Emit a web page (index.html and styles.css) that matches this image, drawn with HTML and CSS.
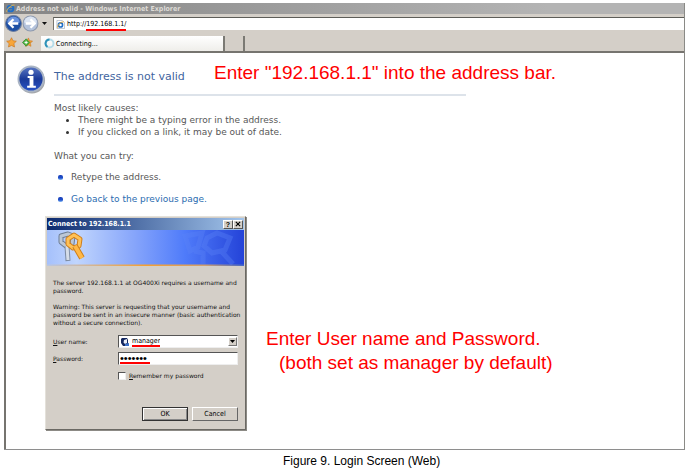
FILE: index.html
```
<!DOCTYPE html>
<html lang="en">
	<head>
		<meta charset="utf-8">
		<title>Figure 9. Login Screen (Web)</title>
		<meta name="viewport" content="width=device-width, initial-scale=1.0">
		<link rel="stylesheet" href="styles.css">
	</head>
	<body>
		<figure class="figure">
			<div class="browser">
				<header class="titlebar">
					<svg class="logo" viewBox="0 0 10 10">
						<circle cx="5" cy="5" r="3.3" fill="none" stroke="#1f6fc9" stroke-width="2"/>
						<path d="M3 5.2h5" stroke="#1f6fc9" stroke-width="1.4"/>
						<path d="M.8 8.6C1 5 6 .8 9.4 1.2" fill="none" stroke="#f0bd4a"/>
					</svg>
					<span>Address not valid - Windows Internet Explorer</span>
				</header>

				<div class="nav">
					<button class="round" type="button" aria-label="Back">
						<svg viewBox="0 0 16 16">
							<circle cx="8" cy="8" r="7.5" fill="#1d4fa4" stroke="#6f7f9e"/>
							<path d="M2 7a6 5.5 0 0 1 12 0q-6 2-12 0z" fill="#6c94dd"/>
							<path d="M12.5 8H5M8 4L4 8l4 4" fill="none" stroke="#fff" stroke-width="2.2"/>
						</svg>
					</button>
					<button class="round" type="button" aria-label="Forward">
						<svg viewBox="0 0 16 16">
							<circle cx="8" cy="8" r="7" fill="#b4c3dc" stroke="#8d99ae"/>
							<path d="M2 7a6 5.5 0 0 1 12 0q-6 2-12 0z" fill="#dbe4f2"/>
							<path d="M3.5 8H11M8 4l4 4-4 4" fill="none" stroke="#fff" stroke-width="2.2"/>
						</svg>
					</button>
					<svg class="caret" viewBox="0 0 5 3"><path d="M0 0h5L2.5 3z" fill="#111"/></svg>
					<div class="address">
						<svg class="logo" viewBox="0 0 10 10">
							<path d="M1 .5h6L9.5 3v6.5H1z" fill="#fff" stroke="#9aa5b5" stroke-width=".7"/>
							<circle cx="5" cy="5.5" r="2.3" fill="none" stroke="#1f6fc9" stroke-width="1.8"/>
							<path d="M1.5 8.5C2 5 5 2 8.5 2" fill="none" stroke="#e8a62f"/>
						</svg>
						<span>http://<mark>192.168.1.1/</mark></span>
					</div>
				</div>

				<div class="tabs">
					<svg class="star" viewBox="0 0 12 12">
						<path d="M6 .8l1.6 3.3 3.7.5-2.7 2.6.7 3.7L6 9.2l-3.3 1.7.7-3.7L.7 4.6l3.7-.5z" fill="#f8a63a" stroke="#c9741c" stroke-width=".7"/>
					</svg>
					<svg class="star" viewBox="0 0 12 12">
						<path d="M7 1l1.3 3 3.2.4-2.3 2.3.6 3.5-2.8-1.5-3 1.5.5-3.5L2 4.4 5.5 4z" fill="#f5a43b" stroke="#c9741c" stroke-width=".6"/>
						<path d="M4.5 2L8.5 6l-4 4L.5 6z" fill="#53b848" stroke="#267c24" stroke-width=".7"/>
						<path d="M4.5 4.3v3.4M2.8 6h3.4" stroke="#fff"/>
					</svg>
					<div class="tab">
						<svg class="spinner" viewBox="0 0 11 11">
							<circle cx="5.5" cy="5.5" r="4" fill="none" stroke="#b5dcea" stroke-width="2"/>
							<path d="M5.5 1.5a4 4 0 0 0-2 7.4" fill="none" stroke="#2f92b8" stroke-width="2"/>
						</svg>
						<span>Connecting...</span>
					</div>
					<div class="newtab"></div>
				</div>

				<main class="page">
					<svg class="info" viewBox="0 0 30 30">
						<defs>
							<linearGradient id="blue" x2="0" y2="1">
								<stop offset="0" stop-color="#5b78c4"/>
								<stop offset=".5" stop-color="#1b3a99"/>
								<stop offset="1" stop-color="#2a55c8"/>
							</linearGradient>
						</defs>
						<circle cx="15.5" cy="16" r="13.5" fill="#a5a7a9"/>
						<circle cx="14.5" cy="14.5" r="13" fill="url(#blue)" stroke="#a9b4c4" stroke-width="2"/>
						<circle cx="14.5" cy="7.5" r="2.7" fill="#fff"/>
						<path d="M11 11.5h6v10h2.5v2h-9v-2H13v-8h-2z" fill="#fff"/>
					</svg>
					<div class="message">
						<h1>The address is not valid</h1>
						<p>Most likely causes:</p>
						<ul class="causes">
							<li>There might be a typing error in the address.</li>
							<li>If you clicked on a link, it may be out of date.</li>
						</ul>
						<p>What you can try:</p>
						<ul class="tries">
							<li>Retype the address.</li>
							<li><a href="#">Go back to the previous page.</a></li>
						</ul>
					</div>
				</main>

				<p class="note note-address">Enter "192.168.1.1" into the address bar.</p>
				<p class="note note-login">Enter User name and Password.<span>(both set as manager by default)</span></p>

				<form class="dialog">
					<div class="caption">
						<span>Connect to 192.168.1.1</span>
						<button type="button" aria-label="Help">?</button>
						<button type="button" aria-label="Close"><svg viewBox="0 0 7 7"><path d="M1 1l5 5M6 1L1 6" stroke="#000" stroke-width="1.3"/></svg></button>
					</div>
					<svg class="banner" viewBox="0 0 197 36" preserveAspectRatio="none">
						<defs>
							<linearGradient id="sky">
								<stop offset="0" stop-color="#a5c0fb"/>
								<stop offset=".15" stop-color="#c0d5fd"/>
								<stop offset=".45" stop-color="#85a4fb"/>
								<stop offset=".7" stop-color="#4f7bfa"/>
								<stop offset="1" stop-color="#2443d8"/>
							</linearGradient>
							<linearGradient id="stripe">
								<stop offset="0" stop-color="#b9c6e2"/>
								<stop offset=".5" stop-color="#f5a032"/>
								<stop offset=".8" stop-color="#d0a070"/>
								<stop offset="1" stop-color="#4468c8"/>
							</linearGradient>
						</defs>
						<path d="M0 0h197v36H0z" fill="url(#sky)"/>
						<path d="M0 34.5h197V36H0z" fill="url(#stripe)"/>
						<g fill="none" stroke="#5c84f6" stroke-width="5" opacity=".35">
							<path d="M138 6l17-3-4 14-8 4zM147 21l9 2v11M160 8l10-5 13 5-5 12-13 3-8-7zM174 21l12 13"/>
						</g>
						<g fill="none" stroke-linejoin="round">
							<path d="M14 6l7-2 5 2-1 8-6 2-5-4z" stroke="#6d7d94" stroke-width="5"/>
							<path d="M14 6l7-2 5 2-1 8-6 2-5-4z" stroke="#bcc7d6" stroke-width="3"/>
							<path d="M20 16l1 15" stroke="#7e8da4" stroke-width="5"/>
							<path d="M20 16l1 14" stroke="#d5dde8" stroke-width="3"/>
							<path d="M21 9l6-4 6 4-1 7-6 2-5-4z" stroke="#ce7d19" stroke-width="5"/>
							<path d="M21 9l6-4 6 4-1 7-6 2-5-4z" stroke="#ffc156" stroke-width="3"/>
							<path d="M28 16l7 12" stroke="#cf7e18" stroke-width="6"/>
							<path d="M28 16l7 12" stroke="#ffb847" stroke-width="4"/>
						</g>
					</svg>
					<div class="body">
						<p>The server 192.168.1.1 at OG400Xi requires a username and password.</p>
						<p>Warning: This server is requesting that your username and password be sent in an insecure manner (basic authentication without a secure connection).</p>
						<div class="field">
							<label for="user"><u>U</u>ser name:</label>
							<div class="box">
								<svg class="face" viewBox="0 0 8 9">
									<path d="M1 1h5l1 2v4L5 9H2L0 6V2z" fill="#14275f"/>
									<path d="M3 3l3-1v4L4 7 2.5 5.5z" fill="#e9edf5"/>
									<path d="M4 7l4-1v3H4z" fill="#3c70c8"/>
								</svg>
								<input id="user" class="user" type="text" value="manager">
								<button class="drop" type="button" aria-label="Show user names"><svg viewBox="0 0 5 3"><path d="M0 0h5L2.5 3z"/></svg></button>
							</div>
						</div>
						<div class="field">
							<label for="pass"><u>P</u>assword:</label>
							<div class="box">
								<input id="pass" class="pass" type="password" value="manager">
							</div>
						</div>
						<div class="remember">
							<input id="remember" type="checkbox">
							<label for="remember"><u>R</u>emember my password</label>
						</div>
						<div class="actions">
							<button class="ok" type="button">OK</button>
							<button type="button">Cancel</button>
						</div>
					</div>
				</form>
			</div>
			<figcaption>Figure 9. Login Screen (Web)</figcaption>
		</figure>
	</body>
</html>
```
FILE: styles.css
```
* {
	box-sizing: border-box;
}
body {
	margin: 0;
	background-color: #FFF;
	font-family: "Liberation Sans", Arial, sans-serif;
}
svg {
	display: block;
	flex: none;
}
h1, p, ul {
	margin: 0;
	padding: 0;
}
button {
	margin: 0;
	padding: 0;
}

.figure {
	margin: 3px 0 0 4px;
}
.browser {
	position: relative;
	border-right: 1px solid #8a8a86;
	border-bottom: 1px solid #8e8e8e;
	background-color: #d4cfc8;
	font-family: "DejaVu Sans Condensed", "DejaVu Sans", sans-serif;
	font-size: 7px;
}

.titlebar {
	display: flex;
	align-items: center;
	gap: 1px;
	height: 11px;
	padding-left: 2px;
	background: linear-gradient(to right, #858585, #b4b4b4 80%);
	color: #dedbd6;
	font-weight: bold;
	white-space: nowrap;
}
.logo {
	width: 9px;
	height: 9px;
}

.nav {
	display: flex;
	align-items: center;
	height: 19px;
	padding-left: 1px;
}
.round {
	width: 17px;
	height: 17px;
	border: 0;
	background: none;
}
.round svg {
	width: 17px;
	height: 17px;
}
.caret {
	width: 5px;
	height: 3px;
	margin: 0 6px 0 3px;
}
.address {
	display: flex;
	flex: 1;
	align-items: center;
	gap: 2px;
	height: 13px;
	padding-left: 2px;
	border-top: 1px solid #5d5d58;
	border-left: 1px solid #77756f;
	background-color: #FFF;
}
.address mark {
	padding-bottom: 1px;
	border-bottom: 2px solid #F00;
	background: none;
}

.tabs {
	display: flex;
	align-items: center;
	gap: 5px;
	height: 18px;
	padding-left: 2px;
}
.star {
	width: 11px;
	height: 11px;
}
.tab {
	display: flex;
	align-items: center;
	gap: 1px;
	align-self: flex-end;
	width: 184px;
	height: 15px;
	margin-left: 3px;
	padding-left: 3px;
	border-right: 2px solid #7b7a74;
	background: linear-gradient(#FFF, #efeeea);
}
.spinner {
	width: 11px;
	height: 11px;
}
.newtab {
	align-self: flex-end;
	width: 15px;
	height: 15px;
	border-right: 2px solid #7b7a74;
}

.page {
	display: flex;
	gap: 8px;
	min-height: 398px;
	padding: 12px 0 0 11px;
	border-top: 2px solid #76746f;
	border-left: 2px solid #76746f;
	background-color: #FFF;
	color: #575757;
	font-family: "DejaVu Sans", Verdana, sans-serif;
	font-size: 9px;
	line-height: 12px;
}
.info {
	width: 29px;
	height: 29px;
}
.message {
	flex: 0 1 412px;
}
.message h1 {
	margin-bottom: 6px;
	padding: 5px 0 10px;
	border-bottom: 2px solid #dde3ea;
	color: #3f65a0;
	font-size: 11px;
	font-weight: normal;
	line-height: 14px;
}
.causes {
	margin-bottom: 12px;
	padding-left: 24px;
}
.causes li::marker {
	color: #333;
}
.tries {
	padding-top: 9px;
	list-style: none;
}
.tries li {
	display: flex;
	align-items: center;
	gap: 8px;
	margin-bottom: 10px;
	padding-left: 4px;
}
.tries li::before {
	content: "";
	width: 5px;
	height: 5px;
	border-radius: 2px;
	background: linear-gradient(#1c3fb5, #1e50cd 60%, #8fc4f5);
}
.tries a {
	color: #2b6cb0;
	text-decoration: none;
}

.note {
	position: absolute;
	color: #F00;
	font-family: "Liberation Sans", Arial, sans-serif;
	font-size: 19px;
	line-height: 24px;
	white-space: nowrap;
}
.note-address {
	top: 58px;
	left: 210px;
}
.note-login {
	top: 324px;
	left: 262px;
}
.note-login span {
	display: block;
	padding-left: 13px;
}

.dialog {
	position: absolute;
	top: 213px;
	left: 41px;
	width: 201px;
	padding: 1px;
	border: 1px solid;
	border-color: #e4e1da #6b6964 #6b6964 #e4e1da;
	background-color: #d4cfc8;
	box-shadow: 1px 1px 0 #8c8a85;
	color: #111;
	line-height: 8px;
}
.caption {
	display: flex;
	align-items: center;
	height: 12px;
	padding: 0 1px;
	background: linear-gradient(to right, #0c2a6e, #a3c5ec);
	color: #FFF;
	font-weight: bold;
}
.caption span {
	flex: 1;
}
.caption button {
	display: grid;
	place-items: center;
	width: 10px;
	height: 9px;
	border: 1px solid;
	border-color: #FFF #555 #555 #FFF;
	background-color: #d4cfc8;
	font-size: 7px;
	font-weight: bold;
	line-height: 7px;
}
.caption svg {
	width: 6px;
	height: 6px;
}
.banner {
	width: 100%;
	height: 36px;
}
.body {
	padding: 13px 6px 7px;
	font-family: "DejaVu Sans", Tahoma, sans-serif;
	font-size: 6px;
}
.body p {
	margin: 0 -5px 8px 0;
}
.field {
	display: flex;
	align-items: center;
	margin-top: 4px;
}
.field label {
	width: 65px;
}
.box {
	display: flex;
	flex: 1;
	align-items: center;
	height: 13px;
	padding-left: 1px;
	border: 1px solid;
	border-color: #555 #eee #eee #555;
	background-color: #FFF;
}
.box input {
	padding: 0;
	border: 0;
	border-bottom: 2px solid #F00;
	outline: 0;
	background: none;
	font-family: "DejaVu Sans Condensed", "DejaVu Sans", sans-serif;
	font-size: 7px;
}
.face {
	width: 8px;
	height: 9px;
	margin: 0 3px 0 1px;
}
.box .user {
	width: 28px;
	height: 11px;
}
.box .pass {
	width: 30px;
	height: 11px;
	font-family: "Liberation Sans", Arial, sans-serif;
	font-size: 11px;
}
.drop {
	display: grid;
	place-items: center;
	width: 9px;
	height: 9px;
	margin-left: auto;
	border: 1px solid;
	border-color: #FFF #777 #777 #FFF;
	background-color: #d4cfc8;
}
.drop svg {
	width: 5px;
	height: 3px;
}
.remember {
	display: flex;
	align-items: center;
	gap: 3px;
	margin: 7px 0 0 65px;
}
.remember input {
	appearance: none;
	width: 8px;
	height: 8px;
	margin: 0;
	border: 1px solid;
	border-color: #555 #eee #eee #555;
	background-color: #FFF;
}
.actions {
	display: flex;
	justify-content: flex-end;
	gap: 4px;
	margin-top: 27px;
}
.actions button {
	width: 46px;
	height: 14px;
	border: 1px solid;
	border-color: #FFF #666 #666 #FFF;
	background-color: #d4cfc8;
	font-family: "DejaVu Sans Condensed", "DejaVu Sans", sans-serif;
	font-size: 7px;
}
.actions .ok {
	border-color: #333;
	box-shadow: inset 1px 1px 0 #FFF, inset -1px -1px 0 #888;
}

figcaption {
	padding: 4px 0 0 279px;
	font-size: 12px;
	line-height: 14px;
	white-space: nowrap;
}
```
